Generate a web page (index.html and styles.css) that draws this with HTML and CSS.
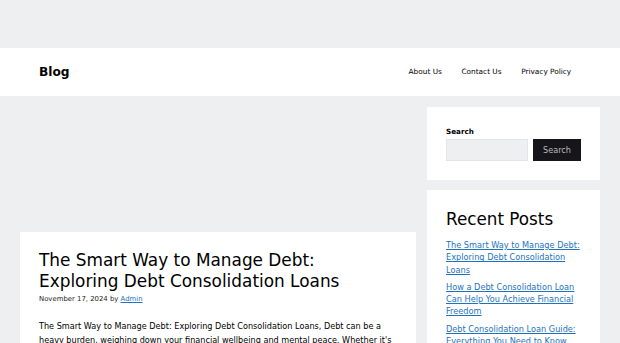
FILE: index.html
```html
<!DOCTYPE html>
<html lang="en">
<head>
    <meta charset="UTF-8">
    <meta name="viewport" content="width=device-width, initial-scale=1.0">
    <title>Blog</title>
    <link rel="stylesheet" href="styles.css">
</head>
<body>
<div class="top-strip"></div>
<header class="site-header">
    <div class="inside-header">
        <p class="site-title"><a href="#">Blog</a></p>
        <nav class="main-nav">
            <ul>
                <li><a href="#">About Us</a></li>
                <li><a href="#">Contact Us</a></li>
                <li><a href="#">Privacy Policy</a></li>
            </ul>
        </nav>
    </div>
</header>
<div class="site-content">
    <main class="content-area">
        <div class="ad-slot"></div>
        <article class="post">
            <h2 class="entry-title">The Smart Way to Manage Debt: Exploring Debt Consolidation Loans</h2>
            <div class="entry-meta">November 17, 2024 by <a href="#">Admin</a></div>
            <div class="entry-content">
                <p>The Smart Way to Manage Debt: Exploring Debt Consolidation Loans, Debt can be a heavy burden, weighing down your financial wellbeing and mental peace. Whether it's credit card balances, medical bills or personal loans, juggling several payments every month can feel overwhelming.</p>
            </div>
        </article>
    </main>
    <aside class="sidebar">
        <section class="widget">
            <form class="search-form">
                <label class="search-label" for="s">Search</label>
                <div class="search-row">
                    <input type="search" id="s" class="search-input">
                    <button type="button" class="search-btn">Search</button>
                </div>
            </form>
        </section>
        <section class="widget">
            <h2 class="widget-title">Recent Posts</h2>
            <ul class="recent-posts">
                <li><a href="#">The Smart Way to Manage Debt: Exploring Debt Consolidation Loans</a></li>
                <li><a href="#">How a Debt Consolidation Loan Can Help You Achieve Financial Freedom</a></li>
                <li><a href="#">Debt Consolidation Loan Guide: Everything You Need to Know</a></li>
            </ul>
        </section>
    </aside>
</div>
</body>
</html>
```

FILE: styles.css
```css
body {
    margin: 0;
    background-color: #eeeff1;
    color: #111;
    font-family: "DejaVu Sans", sans-serif;
    font-size: 8.15px;
    line-height: 1.7;
}
a {
    color: #1e73be;
}
.top-strip {
    height: 48px;
}
.site-header {
    background: #fff;
}
.inside-header {
    height: 48px;
    padding: 0 39px;
    display: flex;
    align-items: center;
    justify-content: space-between;
}
.site-title {
    margin: 0;
    font-size: 12.2px;
    font-weight: bold;
    line-height: 1;
}
.site-title a {
    color: #000;
    text-decoration: none;
}
.main-nav ul {
    list-style: none;
    margin: 0;
    padding: 0;
    display: flex;
}
.main-nav a {
    display: block;
    padding: 0 9.8px;
    font-size: 7.35px;
    line-height: 48px;
    color: #000;
    text-decoration: none;
}
.site-content {
    display: grid;
    grid-template-columns: 396px 173px;
    column-gap: 11px;
    padding: 11px 20px 0;
    align-items: start;
}
.ad-slot {
    height: 114px;
    margin-bottom: 11px;
}
.post {
    background: #fff;
    padding: 18px 19px 20px;
}
.entry-title {
    margin: 0;
    font-size: 16.9px;
    font-weight: normal;
    line-height: 21px;
    color: #000;
}
.entry-meta {
    margin-top: 2px;
    font-size: 6.9px;
    line-height: 11px;
    color: #222;
}
.entry-content {
    margin-top: 15px;
}
.entry-content p {
    margin: 0;
    color: #000;
}
.widget {
    background: #fff;
    padding: 19px;
    margin-bottom: 10px;
}
.search-label {
    display: block;
    font-size: 7.2px;
    font-weight: bold;
    line-height: 12px;
    margin-bottom: 1px;
    color: #000;
}
.search-row {
    display: flex;
    gap: 5px;
}
.search-input {
    flex: 1;
    min-width: 0;
    height: 22px;
    box-sizing: border-box;
    margin: 0;
    background: #eeeff1;
    border: 1px solid #e4e5e8;
    border-radius: 0;
}
.search-btn {
    width: 48px;
    height: 22px;
    margin: 0;
    padding: 0;
    border: none;
    background: #16151a;
    color: #b9b9bd;
    font-family: inherit;
    font-size: 8.1px;
    cursor: pointer;
}
.widget-title {
    margin: 0 0 10px;
    font-size: 16.8px;
    font-weight: normal;
    line-height: 20px;
    color: #000;
}
.recent-posts {
    list-style: none;
    margin: 0;
    padding: 0;
}
.recent-posts li {
    margin-bottom: 5px;
    font-size: 8.2px;
    line-height: 12.3px;
}
```
